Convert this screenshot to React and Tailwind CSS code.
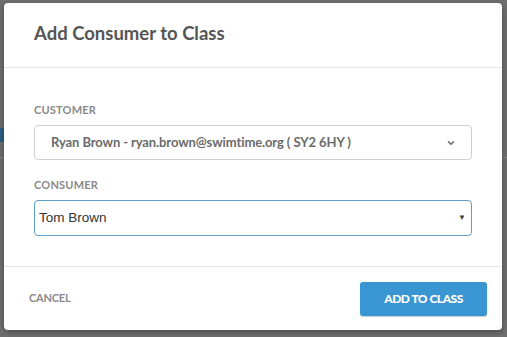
import React from 'react';

const Chevron = () => (
  <svg width="10" height="10" viewBox="0 0 10 10" className="text-[#777]">
    <path d="M2.5 3.8 L5 6.2 L7.5 3.8" fill="none" stroke="currentColor" strokeWidth="1.6" strokeLinecap="round" strokeLinejoin="round" />
  </svg>
);

export default function App() {
  return (
    <div className="relative w-[507px] h-[337px] bg-[#6f6f6f] overflow-hidden" style={{ fontFamily: 'Lato, "Open Sans", sans-serif' }}>
      {/* page content peeking behind the dialog */}
      <div className="absolute left-0 top-[128px] w-[4px] h-[14px] bg-[#2d5f84]" />
      <div className="absolute left-0 top-[157px] w-full h-px bg-[#858585]" />

      <div className="relative pt-[3px] pl-[4px]">
        <div className="w-[498px] h-[327px] bg-white rounded-[4px] shadow-[0_2px_6px_rgba(0,0,0,0.35)] flex flex-col">
          {/* header */}
          <div className="h-[65px] border-b border-[#e6e6e6] px-[30px] flex items-center">
            <h1 className="text-[18.5px] font-bold text-[#555] tracking-[0px] mt-[-2px]">Add Consumer to Class</h1>
          </div>

          {/* body */}
          <div className="flex-1 px-[30px] pt-[35px]">
            <label className="block text-[11px] font-bold text-[#8a8a8a] leading-[14px] tracking-[0.2px]">CUSTOMER</label>
            <div className="mt-[8px] h-[35px] border border-[#cfcfcf] rounded-[4px] flex items-center justify-between pl-[16px] pr-[15px]">
              <span className="text-[13px] font-bold text-[#6b6b6b] tracking-[-0.1px]">Ryan Brown - ryan.brown@swimtime.org ( SY2 6HY )</span>
              <Chevron />
            </div>

            <label className="block mt-[18px] text-[11px] font-bold text-[#8a8a8a] leading-[14px] tracking-[0.2px]">CONSUMER</label>
            <div className="mt-[8px] h-[36px] border border-[#5d9ec6] rounded-[4px] flex items-center justify-between pl-[4px] pr-[5px]" style={{ fontFamily: '"Liberation Sans", Arial, sans-serif' }}>
              <span className="text-[13.5px] text-[#333] mt-[1px]">Tom Brown</span>
              <span className="text-[8px] text-[#444]">▼</span>
            </div>
          </div>

          {/* footer */}
          <div className="h-[64px] border-t border-[#e6e6e6] flex items-center justify-between pl-[25px] pr-[15px]">
            <button className="text-[11px] font-bold text-[#8a8a8a] tracking-[-0.2px]">CANCEL</button>
            <button className="w-[127px] h-[34px] bg-[#3a96d2] rounded-[3px] text-white text-[12px] font-black tracking-[-0.5px] shadow-[0_1px_1px_rgba(0,0,0,0.2)]">ADD TO CLASS</button>
          </div>
        </div>
      </div>
    </div>
  );
}
